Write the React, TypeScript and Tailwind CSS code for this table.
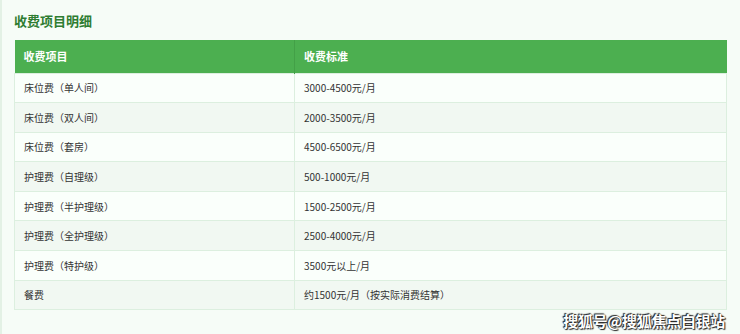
const rows = [
  ["床位费（单人间）", "3000-4500元/月"],
  ["床位费（双人间）", "2000-3500元/月"],
  ["床位费（套房）", "4500-6500元/月"],
  ["护理费（自理级）", "500-1000元/月"],
  ["护理费（半护理级）", "1500-2500元/月"],
  ["护理费（全护理级）", "2500-4000元/月"],
  ["护理费（特护级）", "3500元以上/月"],
  ["餐费", "约1500元/月（按实际消费结算）"],
];

export default function App() {
  return (
    <div
      className="w-[740px] h-[334px] overflow-hidden bg-[#f6fcf7] border-l-2 border-[#e3f1e5] pl-[12px] pr-[13px] pt-[11px]"
      style={{ fontFamily: '"Noto Sans CJK SC", "Noto Sans", sans-serif' }}
    >
      <h2 className="text-[13px] font-bold text-[#2e7d32] leading-[20px]">收费项目明细</h2>
      <table className="mt-[9px] w-full border-collapse text-[10px] text-[#333]">
        <thead>
          <tr className="bg-[#4caf50] text-white h-[33px]">
            <th className="w-[280px] text-left font-bold text-[11px] px-[9px] border-r border-[#43a047]">收费项目</th>
            <th className="text-left font-bold text-[11px] px-[9px]">收费标准</th>
          </tr>
        </thead>
        <tbody>
          {rows.map(([a, b], i) => (
            <tr
              key={a}
              className={`h-[29.6px] border border-[#dcefdf] ${i % 2 === 0 ? "bg-[#fafffb]" : "bg-[#f1f8f2]"}`}
            >
              <td className="px-[9px] border-r border-[#dcefdf]">{a}</td>
              <td className="px-[9px]">{b}</td>
            </tr>
          ))}
        </tbody>
      </table>
      <div className="flex justify-end pr-[2px]">
        <span
          className="text-[15px] leading-[22px] text-white font-bold tracking-[-0.3px]"
          style={{ textShadow: "0 0 1px #222, 1px 1px 1px #222, -1px -1px 1px #222" }}
        >
          搜狐号@搜狐焦点白银站
        </span>
      </div>
    </div>
  );
}
